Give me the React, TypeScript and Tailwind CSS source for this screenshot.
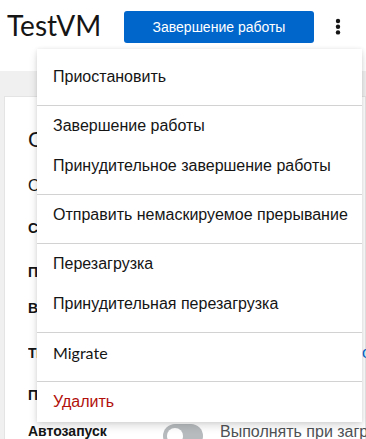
import React from 'react'

const sans = { fontFamily: '"Liberation Sans", Arial, sans-serif' }

const Kebab = () => (
    <svg width="6" height="18" viewBox="0 0 6 18" fill="#151515">
        <circle cx="3" cy="3" r="2.2" />
        <circle cx="3" cy="8.7" r="2.2" />
        <circle cx="3" cy="14.4" r="2.2" />
    </svg>
)

const groups: { label: string; latin?: boolean; danger?: boolean }[][] = [
    [{ label: 'Приостановить' }],
    [{ label: 'Завершение работы' }, { label: 'Принудительное завершение работы' }],
    [{ label: 'Отправить немаскируемое прерывание' }],
    [{ label: 'Перезагрузка' }, { label: 'Принудительная перезагрузка' }],
    [{ label: 'Migrate', latin: true }],
    [{ label: 'Удалить', danger: true }],
]

const Row = ({ label, h, children }: { label: string; h: string; children?: React.ReactNode }) => (
    <div className={'flex items-start ' + h}>
        <span className='w-[135px] shrink-0 font-bold whitespace-nowrap overflow-hidden'>{label}</span>
        {children}
    </div>
)

const App = () => {
    return (
        <div className='relative w-[366px] h-[439px] overflow-hidden bg-[#f0f0f0]' style={sans}>

            {/* header */}
            <div className='h-[71px] bg-white flex items-start'>
                <h1 className="w-[124px] shrink-0 pl-[7px] mt-[7px] text-[28px] leading-[36px] text-[#151515] font-['Lato',sans-serif] whitespace-nowrap">TestVM</h1>
                <button className='mt-[11px] w-[190px] h-[32px] shrink-0 rounded-[3px] bg-[#0066cc] text-white text-[14px]'>Завершение работы</button>
                <button className='ml-[19px] mt-[18px] w-[10px] h-[18px] flex justify-center'><Kebab /></button>
            </div>

            {/* card behind menu */}
            <div className='mt-[25px] ml-[4px] bg-white border border-[#e4e4e4] pl-[23px] pt-[29px] h-[400px]'>
                <h2 className='text-[22px] leading-[28px] text-[#151515]'>Обзор</h2>
                <h3 className='mt-[20px] text-[16px] leading-[24px] text-[#151515]'>Общее</h3>

                <div className='mt-[20px] text-[14px] leading-5 text-[#151515]'>
                    <Row label='Состояние' h='h-[44px]' />
                    <Row label='Память' h='h-[36px]' />
                    <Row label='Виртуальные ЦП' h='h-[45px]' />
                    <Row label='Тип ЦП' h='h-[42px]'>
                        <span className='text-[16px] leading-5 text-[#0066cc] ml-[199px] whitespace-nowrap'>о</span>
                    </Row>
                    <Row label='Порядок загрузки' h='h-[36px]' />
                    <Row label='Автозапуск' h='h-[24px]'>
                        <span className='mt-[3px] w-[40px] h-[24px] rounded-full bg-[#b8bbbe] flex items-center pl-[4px] shrink-0'>
                            <span className='w-[16px] h-[16px] rounded-full bg-white' />
                        </span>
                        <span className='ml-[17px] mt-[-1px] text-[16px] leading-6 text-[#4f5255] whitespace-nowrap'>Выполнять при загрузке хоста</span>
                    </Row>
                </div>
            </div>

            {/* dropdown menu */}
            <div className='absolute left-[37px] top-[49px] w-[325px] bg-white pt-2 shadow-[0_4px_8px_0_rgba(3,3,3,0.14),0_0_4px_0_rgba(3,3,3,0.08)]'>
                {groups.map((g, i) => (
                    <div key={i}>
                        {i > 0 && <div className='mt-2 h-px bg-[#d2d2d2]' />}
                        {g.map((item) => (
                            <div
                                key={item.label}
                                className={
                                    'px-4 py-2 text-[16px] leading-6 whitespace-nowrap ' +
                                    (item.danger ? 'text-[#b1100b]' : 'text-[#151515]')
                                }
                                style={item.latin ? { fontFamily: 'Lato, "Liberation Sans", sans-serif' } : undefined}
                            >
                                {item.label}
                            </div>
                        ))}
                    </div>
                ))}
            </div>

        </div>
    )
}

export default App
